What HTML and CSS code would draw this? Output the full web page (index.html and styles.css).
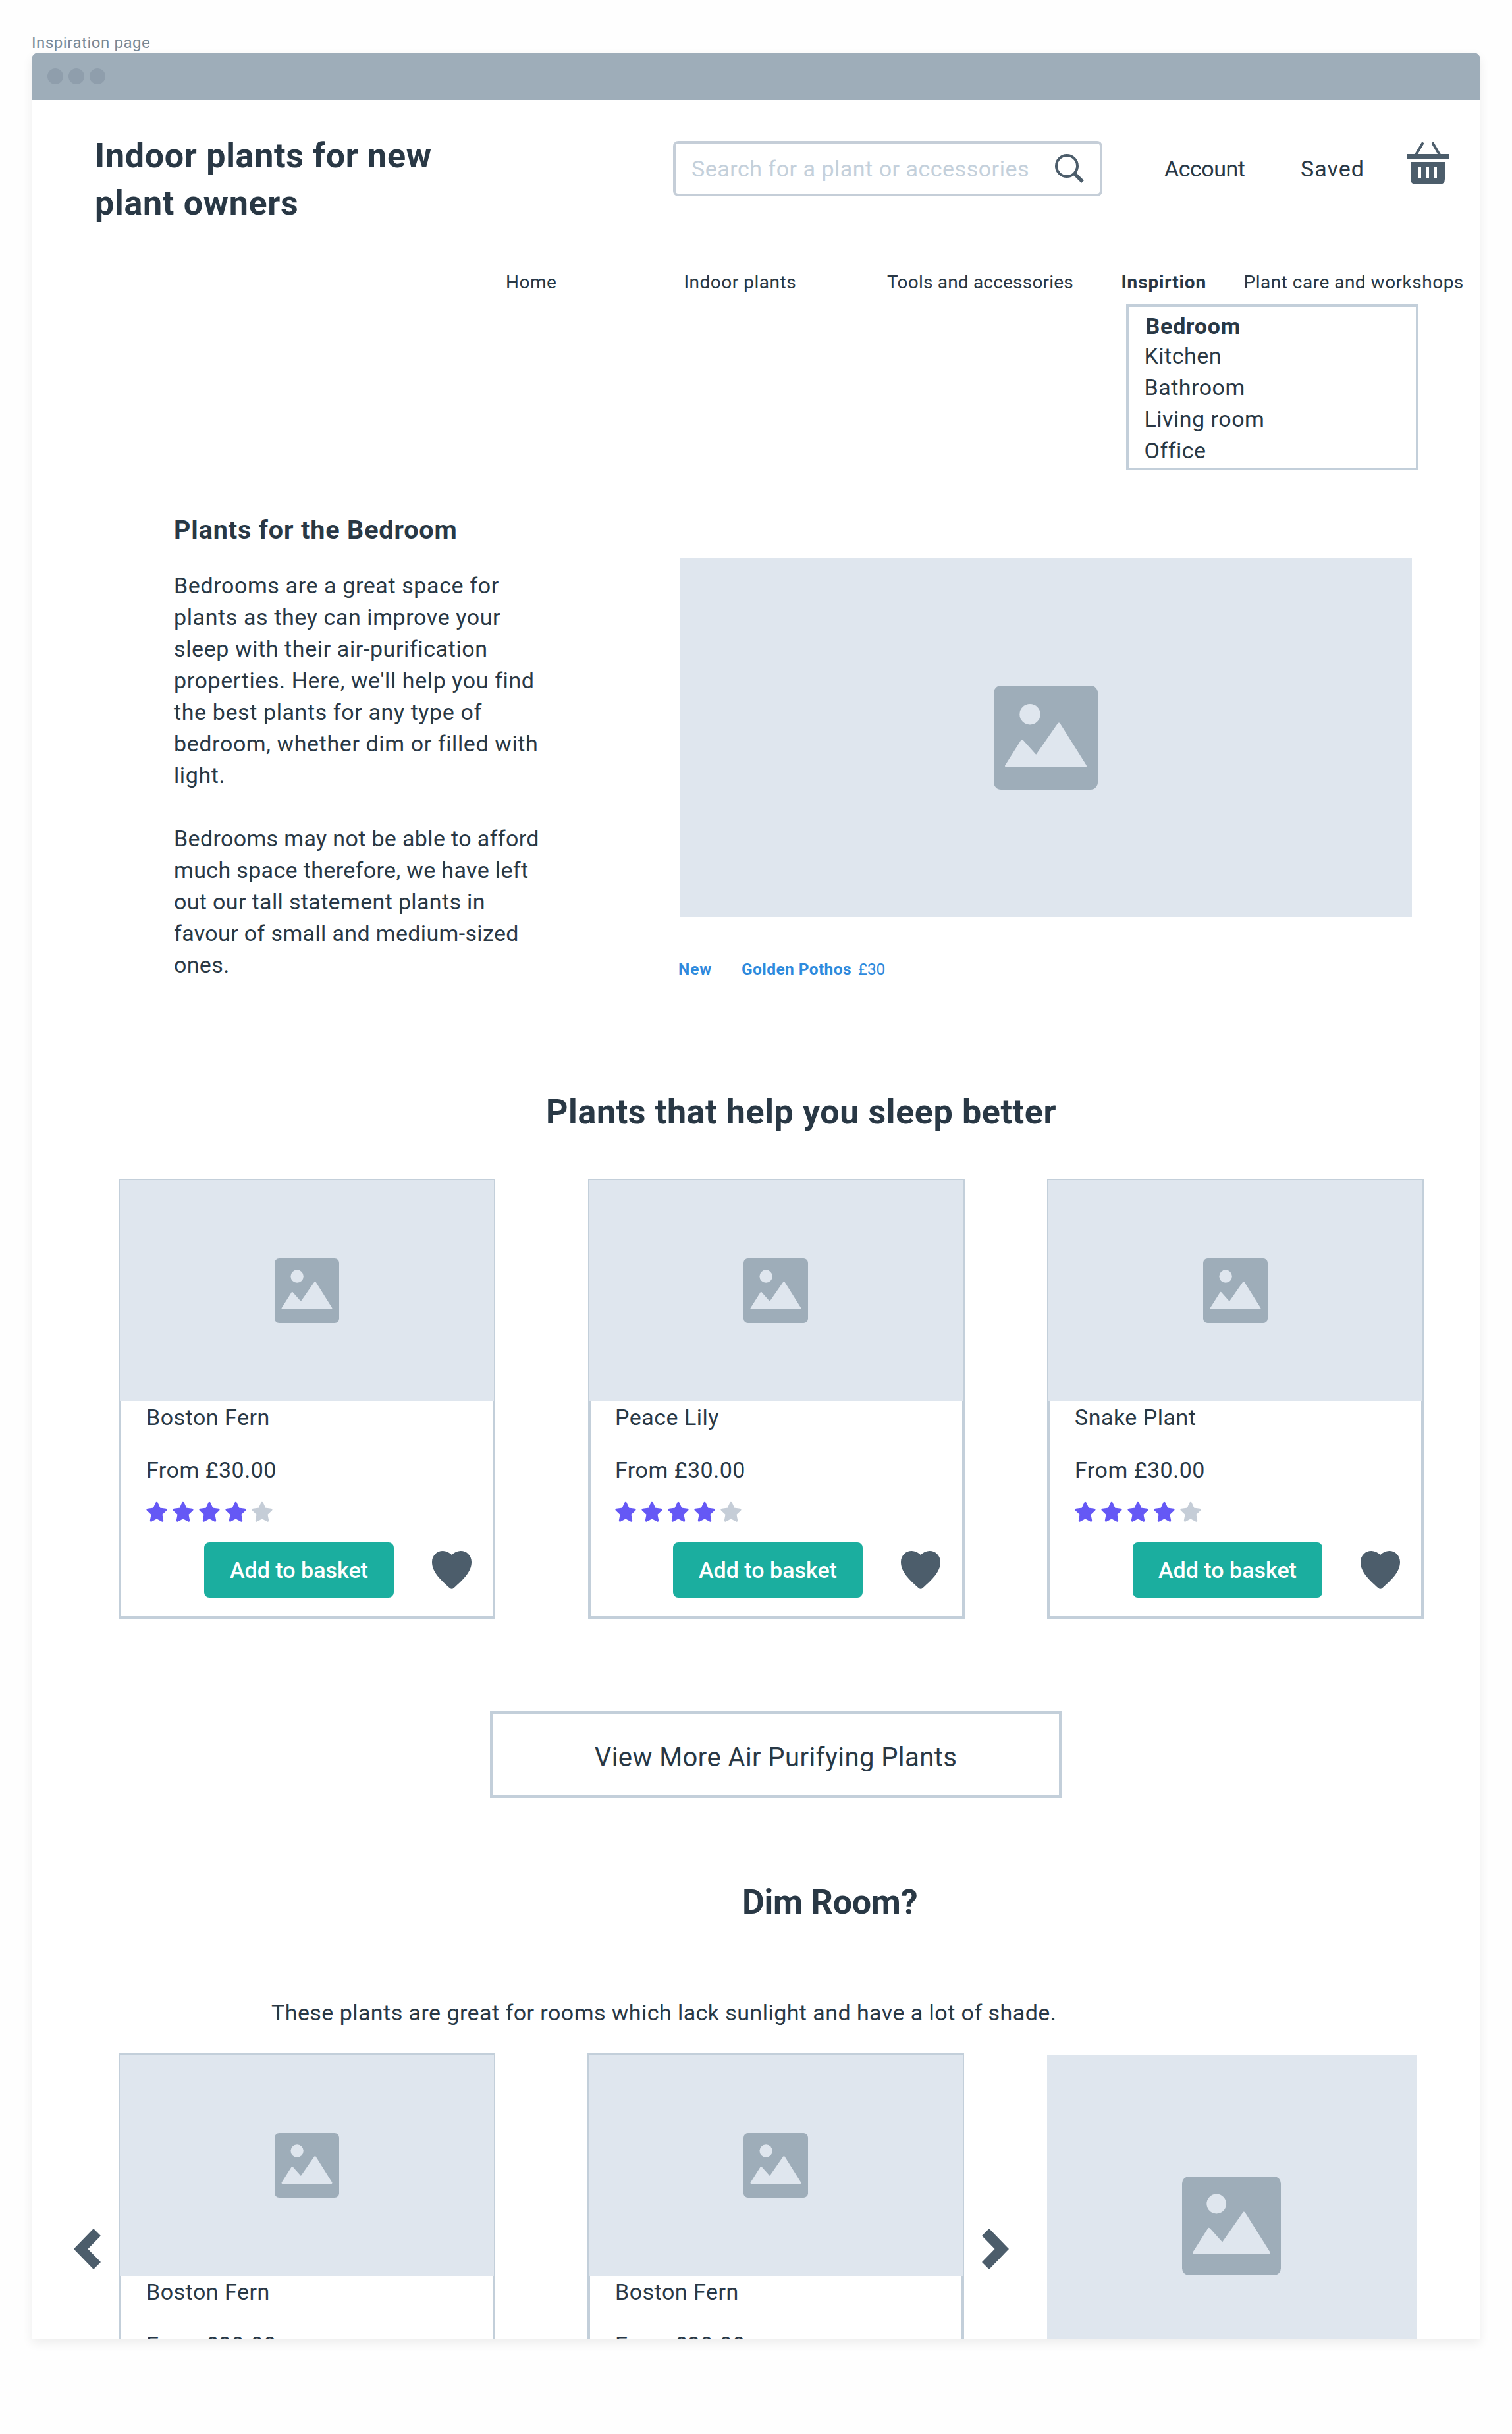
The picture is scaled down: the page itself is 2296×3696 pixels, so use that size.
FILE: index.html
```
<!DOCTYPE html>
<html lang="en">
<head>
<meta charset="utf-8">
<title>Inspiration page</title>
<link rel="stylesheet" href="styles.css">
</head>
<body>
<svg class="defs" aria-hidden="true">
  <symbol id="picture" viewBox="0 0 158 158">
    <rect width="158" height="158" rx="11" fill="#9eadb9"/>
    <circle cx="55" cy="43.7" r="15.7" fill="#dfe6ee"/>
    <path d="M19 122 43 84 64.5 108 99 58.5 139 122Z" fill="#dfe6ee" stroke="#dfe6ee" stroke-width="4" stroke-linejoin="round"/>
  </symbol>
  <symbol id="star" viewBox="0 0 32 32">
    <path d="M16 2.5 20.1 11.3 29.8 12.5 22.7 19.2 24.5 29 16 24.6 7.5 29 9.3 19.2 2.2 12.5 11.9 11.3Z" fill="currentColor" stroke="currentColor" stroke-width="3.4" stroke-linejoin="round"/>
  </symbol>
  <symbol id="heart" viewBox="0 0 60 58">
    <path d="M30 6C26 2 21 0 16.5 0 7 0 0 7.500 0 17 0 32 13 44 27 56.500Q30 59 33 56.500C47 44 60 32 60 17 60 7.500 53 0 43.500 0 39 0 34 2 30 6Z" fill="#4c5d6b"/>
  </symbol>
</svg>

<p class="page-label">Inspiration page</p>
<main class="window">
  <div class="titlebar"><i class="dot"></i><i class="dot"></i><i class="dot"></i></div>

  <header class="header">
    <h1 class="title brand">Indoor plants for new<br>plant owners</h1>
    <div class="search">
      <span>Search for a plant or accessories</span>
      <svg width="44" height="44" viewBox="0 0 44 44" fill="none" stroke="#4c5d6b"><circle cx="18" cy="18" r="16" stroke-width="4"/><path d="M29.500 29.500 42 42" stroke-width="5.500"/></svg>
    </div>
    <a class="link account">Account</a>
    <a class="link saved">Saved</a>
    <svg class="basket" width="64" height="64" viewBox="0 0 64 64">
      <path d="M24 2 14 19M40 2 50 19" stroke="#4c5d6b" stroke-width="4" stroke-linecap="round"/>
      <path d="M0 18H64V26H0ZM6 30H58V56Q58 64 50 64H14Q6 64 6 56Z" fill="#4c5d6b"/>
      <path d="M18 38h4v16h-4zM30 38h4v16h-4zM42 38h4v16h-4z" fill="#fff"/>
    </svg>
  </header>

  <nav class="nav">
    <a>Home</a>
    <a>Indoor plants</a>
    <a class="tools">Tools and accessories</a>
    <div class="current">
      <a>Inspirtion</a>
      <ul class="menu">
        <li class="active">Bedroom</li>
        <li>Kitchen</li>
        <li>Bathroom</li>
        <li>Living room</li>
        <li>Office</li>
      </ul>
    </div>
    <a>Plant care and workshops</a>
  </nav>

  <section class="hero">
    <div class="intro">
      <h2>Plants for the Bedroom</h2>
      <p>Bedrooms are a great space for<br>plants as they can improve your<br>sleep with their air-purification<br>properties. Here, we'll help you find<br>the best plants for any type of<br>bedroom, whether dim or filled with<br>light.</p>
      <p>Bedrooms may not be able to afford<br>much space therefore, we have left<br>out our tall statement plants in<br>favour of small and medium-sized<br>ones.</p>
    </div>
    <div class="feature">
      <div class="picture wide"><svg width="158" height="158"><use href="#picture"/></svg></div>
      <div class="caption"><b class="new">New</b><b class="plant">Golden Pothos</b><span>£30</span></div>
    </div>
  </section>

  <h2 class="title sleep">Plants that help you sleep better</h2>
  <section class="cards">
    <article class="card">
      <div class="picture"><svg width="98" height="98"><use href="#picture"/></svg></div>
      <div class="body">
        <p>Boston Fern</p>
        <p class="price">From £30.00</p>
        <div class="stars"><svg><use href="#star"/></svg><svg><use href="#star"/></svg><svg><use href="#star"/></svg><svg><use href="#star"/></svg><svg class="off"><use href="#star"/></svg></div>
        <div class="actions"><button>Add to basket</button><svg width="60" height="58"><use href="#heart"/></svg></div>
      </div>
    </article>
    <article class="card middle">
      <div class="picture"><svg width="98" height="98"><use href="#picture"/></svg></div>
      <div class="body">
        <p>Peace Lily</p>
        <p class="price">From £30.00</p>
        <div class="stars"><svg><use href="#star"/></svg><svg><use href="#star"/></svg><svg><use href="#star"/></svg><svg><use href="#star"/></svg><svg class="off"><use href="#star"/></svg></div>
        <div class="actions"><button>Add to basket</button><svg width="60" height="58"><use href="#heart"/></svg></div>
      </div>
    </article>
    <article class="card">
      <div class="picture"><svg width="98" height="98"><use href="#picture"/></svg></div>
      <div class="body">
        <p>Snake Plant</p>
        <p class="price">From £30.00</p>
        <div class="stars"><svg><use href="#star"/></svg><svg><use href="#star"/></svg><svg><use href="#star"/></svg><svg><use href="#star"/></svg><svg class="off"><use href="#star"/></svg></div>
        <div class="actions"><button>Add to basket</button><svg width="60" height="58"><use href="#heart"/></svg></div>
      </div>
    </article>
  </section>

  <a class="more">View More Air Purifying Plants</a>

  <h2 class="title dim">Dim Room?</h2>
  <p class="dim-text">These plants are great for rooms which lack sunlight and have a lot of shade.</p>
  <section class="carousel">
    <svg class="arrow prev" width="41" height="62" viewBox="0 0 41 62"><path d="M0 31 30 0 41 11 21.500 31 41 51 30 62Z" fill="#4c5d6b"/></svg>
    <article class="card">
      <div class="picture"><svg width="98" height="98"><use href="#picture"/></svg></div>
      <div class="body">
        <p>Boston Fern</p>
        <p class="price">From £30.00</p>
      </div>
    </article>
    <article class="card second">
      <div class="picture"><svg width="98" height="98"><use href="#picture"/></svg></div>
      <div class="body">
        <p>Boston Fern</p>
        <p class="price">From £30.00</p>
      </div>
    </article>
    <svg class="arrow next" width="41" height="62" viewBox="0 0 41 62"><path d="M41 31 11 0 0 11 19.500 31 0 51 11 62Z" fill="#4c5d6b"/></svg>
    <div class="picture tall"><svg width="150" height="150"><use href="#picture"/></svg></div>
  </section>
</main>
</body>
</html>
```
FILE: styles.css
```
* { box-sizing: border-box; margin: 0; padding: 0; }
body {
  padding: 48px 48px 0;
  height: 3696px;
  overflow: hidden;
  background: #fefefe;
  color: #293845;
  font: 400 34px/48px Roboto, "Liberation Sans", sans-serif;
  letter-spacing: 0.5px;
}
svg { display: block; flex: none; }
ul { list-style: none; }
.defs { position: absolute; width: 0; height: 0; }

.page-label {
  height: 32px;
  font-size: 24px;
  line-height: 35px;
  letter-spacing: 0.55px;
  color: #788896;
  white-space: nowrap;
}
.window {
  display: flex;
  flex-direction: column;
  width: 2200px;
  height: 3472px;
  overflow: hidden;
  background: #fff;
  border-radius: 10px 10px 0 0;
  box-shadow: 0 6px 16px rgba(0, 0, 0, 0.07);
}
.window > * { flex: none; }
.titlebar {
  display: flex;
  align-items: center;
  gap: 8px;
  height: 72px;
  padding-left: 24px;
  background: #9eadb9;
}
.dot { width: 24px; height: 24px; border-radius: 50%; background: #8f9eac; }

.title { font-size: 52px; line-height: 72px; font-weight: 700; letter-spacing: 0.7px; white-space: nowrap; }

.header { display: flex; align-items: flex-start; padding: 49px 48px 0 96px; }
.brand { width: 878px; }
.search {
  display: flex;
  align-items: center;
  justify-content: space-between;
  width: 652px;
  height: 84px;
  margin-top: 13px;
  padding: 0 24px;
  border: 4px solid #c5ced8;
  border-radius: 8px;
  color: #c4d0db;
  white-space: nowrap;
}
.link { margin-top: 13px; line-height: 84px; }
.account { width: 207px; margin-left: 94px; letter-spacing: -0.5px; }
.saved { width: 161px; letter-spacing: 1px; }
.basket { margin-top: 15px; }

.nav {
  display: grid;
  grid-template-columns: 270.5px 308.5px 355.5px 186px auto;
  padding: 64px 0 0 720px;
  font-size: 28px;
  line-height: 40px;
  white-space: nowrap;
}
.tools { letter-spacing: 0.2px; }
.current { position: relative; font-weight: 700; letter-spacing: 0.88px; }
.menu {
  position: absolute;
  left: 7.5px;
  top: 53px;
  width: 444px;
  height: 252px;
  padding: 9px 0 0 23.5px;
  border: 4px solid #c3cfda;
  font-size: 34px;
  line-height: 48px;
  font-weight: 400;
  letter-spacing: 0.5px;
}
.menu .active { padding-left: 2px; line-height: 41px; font-weight: 700; letter-spacing: 0.8px; }

.hero { display: flex; align-items: flex-start; padding: 332px 0 0 216px; }
.intro { width: 768px; margin-top: -1px; }
.intro h2 { margin-bottom: 36px; font-size: 39.5px; line-height: 49px; letter-spacing: 0.87px; }
.intro p { letter-spacing: 0.6px; }
.intro p + p { margin-top: 48px; letter-spacing: 0.35px; }
.feature { margin-top: 67px; }
.picture { display: flex; align-items: center; justify-content: center; background: #dfe6ee; }
.wide { width: 1112px; height: 544px; }
.caption {
  display: flex;
  margin: 64px 0 0 -2px;
  font-size: 24.5px;
  line-height: 32px;
  letter-spacing: 0.4px;
  color: #2e8add;
}
.new { width: 96px; letter-spacing: 0.9px; }
.plant { width: 177px; }
.caption span { letter-spacing: -0.3px; }

.sleep { margin: 164px 0 65px 781px; letter-spacing: 0.6px; }
.cards { display: grid; grid-template-columns: 713px 697px 572px; padding-left: 132px; }
.card { width: 572px; height: 668px; border: 4px solid #c3cfda; }
.card .picture { width: 568px; height: 336px; margin: -2px 0 0 -2px; }
.middle .picture { padding-right: 2px; }
.body { padding-left: 38px; }
.middle .body { padding-left: 37px; }
.price { margin-top: 32px; }
.stars { display: flex; gap: 8px; margin-top: 24px; color: #6558f5; }
.stars svg { width: 32px; height: 32px; }
.stars .off { color: #c5cdd7; }
.actions { display: flex; align-items: center; gap: 58px; margin: 30px 0 0 88px; }
.actions button {
  width: 288px;
  height: 84px;
  border: 0;
  border-radius: 8px;
  background: #1bae9f;
  color: #fff;
  font: inherit;
  font-weight: 500;
  letter-spacing: 0;
}

.more {
  display: flex;
  align-items: center;
  justify-content: center;
  width: 868px;
  height: 132px;
  margin: 140px 0 0 696px;
  padding-top: 10px;
  border: 4px solid #c3cfda;
  font-size: 40px;
  letter-spacing: 0.42px;
}
.dim { margin: 123px 0 107px 1079px; letter-spacing: -0.24px; }
.dim-text { margin: 0 0 38px 364px; letter-spacing: 0.44px; white-space: nowrap; }

.carousel { display: flex; align-items: flex-start; padding-left: 63.5px; }
.arrow { margin-top: 266px; }
.prev { margin-right: 27.5px; }
.second { margin-left: 140px; }
.next { margin: 266px 58px 0 27px; }
.carousel .card { flex: none; }
.tall { width: 562px; height: 520px; margin-top: 2px; padding-right: 2px; }
```
